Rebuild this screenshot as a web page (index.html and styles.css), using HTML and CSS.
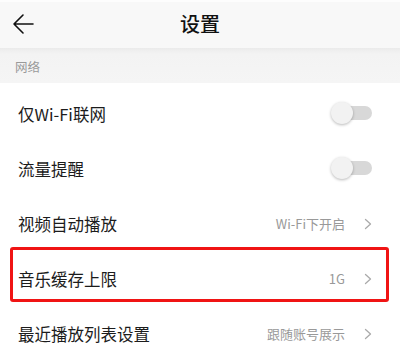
FILE: index.html
```html
<!DOCTYPE html>
<html lang="zh">
<head>
<meta charset="utf-8">
<link rel="stylesheet" href="styles.css">
</head>
<body>
<div class="page">
  <header class="topbar">
    <svg class="back" width="22" height="22" viewBox="0 0 22 22"><path d="M21 11H2M11 2L2 11L11 20" fill="none" stroke="#111" stroke-width="1.6" stroke-linecap="round" stroke-linejoin="round"/></svg>
    <h1 class="title">设置</h1>
  </header>
  <div class="section">网络</div>
  <ul class="list">
    <li class="row"><span class="label">仅Wi-Fi联网</span><span class="toggle"><span class="thumb"></span></span></li>
    <li class="row"><span class="label">流量提醒</span><span class="toggle"><span class="thumb"></span></span></li>
    <li class="row"><span class="label">视频自动播放</span><span class="value">Wi-Fi下开启</span><svg class="chev" width="8" height="12" viewBox="0 0 8 12"><path d="M1.5 1.5L6.5 6L1.5 10.5" fill="none" stroke="#aaa" stroke-width="1.3" stroke-linecap="round" stroke-linejoin="round"/></svg></li>
    <li class="row highlight"><span class="label">音乐缓存上限</span><span class="value">1G</span><svg class="chev" width="8" height="12" viewBox="0 0 8 12"><path d="M1.5 1.5L6.5 6L1.5 10.5" fill="none" stroke="#aaa" stroke-width="1.3" stroke-linecap="round" stroke-linejoin="round"/></svg><span class="mark"></span></li>
    <li class="row"><span class="label">最近播放列表设置</span><span class="value">跟随账号展示</span><svg class="chev" width="8" height="12" viewBox="0 0 8 12"><path d="M1.5 1.5L6.5 6L1.5 10.5" fill="none" stroke="#aaa" stroke-width="1.3" stroke-linecap="round" stroke-linejoin="round"/></svg></li>
  </ul>
</div>
</body>
</html>
```
FILE: styles.css
```css
* { box-sizing: border-box; }
html, body { margin: 0; padding: 0; background: #fff; }
body { font-family: "Noto Sans CJK SC", "Noto Sans", sans-serif; width: 400px; height: 356px; overflow: hidden; }
.page { width: 400px; }
.topbar {
  height: 48px;
  background: #f8f8f8;
  border-top: 2px solid #fdfdfd;
  display: flex;
  align-items: center;
  justify-content: center;
  position: relative;
}
.back { position: absolute; left: 12px; top: 11px; }
.title { margin: 0; font-size: 20px; font-weight: 500; color: #111; line-height: 1; margin-top: -2px; }
.section {
  height: 35px;
  background: linear-gradient(#ebebeb 0, #f3f3f3 6px, #f5f5f5 100%);
  color: #9a9a9a;
  font-size: 12.5px;
  display: flex;
  align-items: center;
  padding-left: 15px;
  padding-top: 2px;
}
.list { list-style: none; margin: 0; padding: 3px 0 0; }
.row {
  height: 55px;
  display: flex;
  align-items: center;
  padding: 0 28px 0 18px;
  position: relative;
}
.label { font-size: 16.5px; color: #1c1c1c; flex: 1; }
.value { font-size: 13px; color: #999; margin-right: 19px; }
.chev { display: block; }
.toggle {
  width: 40px;
  height: 14px;
  border-radius: 7px;
  background: #d8d8d8;
  position: relative;
  margin-top: -2px;
}
.thumb {
  position: absolute;
  left: -1px;
  top: -4px;
  width: 22px;
  height: 22px;
  border-radius: 50%;
  background: #f2f2f2;
  box-shadow: 0 1px 3px rgba(0,0,0,0.28);
}
.mark {
  position: absolute;
  left: 10px;
  right: 11px;
  top: -4px;
  height: 55px;
  border: 3px solid #f01414;
  border-radius: 3px;
  pointer-events: none;
}
```
